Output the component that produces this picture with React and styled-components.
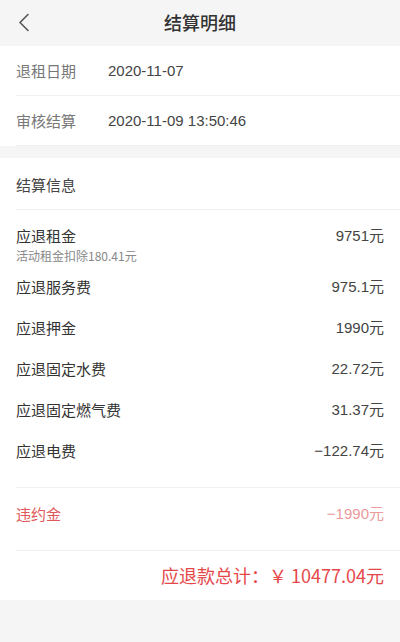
import styled, { createGlobalStyle } from "styled-components";

const GlobalStyle = createGlobalStyle`
  html, body {
    margin: 0;
    padding: 0;
    background: #f5f5f5;
    font-family: "Noto Sans CJK SC", "Liberation Sans", sans-serif;
    color: #333;
  }
`;

const dates = [
  { label: "退租日期", value: "2020-11-07" },
  { label: "审核结算", value: "2020-11-09 13:50:46" },
];

const items = [
  { label: "应退租金", value: "9751元", note: "活动租金扣除180.41元" },
  { label: "应退服务费", value: "975.1元" },
  { label: "应退押金", value: "1990元" },
  { label: "应退固定水费", value: "22.72元" },
  { label: "应退固定燃气费", value: "31.37元" },
  { label: "应退电费", value: "−122.74元" },
];

const BackIcon = () => (
  <svg width="12" height="19" viewBox="0 0 12 19">
    <path
      d="M10 1.5 L2 9.5 L10 17.5"
      fill="none"
      stroke="#555"
      strokeWidth="1.6"
      strokeLinecap="round"
      strokeLinejoin="round"
    />
  </svg>
);

const App = () => {
  return (
    <Page>
      <GlobalStyle />
      <Header>
        <Back>
          <BackIcon />
        </Back>
        <Title>结算明细</Title>
      </Header>

      <Section>
        {dates.map((d) => (
          <DateRow key={d.label}>
            <DateLabel>{d.label}</DateLabel>
            <DateValue>{d.value}</DateValue>
          </DateRow>
        ))}
      </Section>

      <Section $gap>
        <SectionTitle>结算信息</SectionTitle>
        <List>
          {items.map((it) => (
            <Item key={it.label}>
              <ItemMain>
                <ItemLabel>{it.label}</ItemLabel>
                <ItemValue>{it.value}</ItemValue>
              </ItemMain>
              {it.note && <Note>{it.note}</Note>}
            </Item>
          ))}
        </List>
        <Penalty>
          <ItemLabel $red>违约金</ItemLabel>
          <ItemValue $pink>−1990元</ItemValue>
        </Penalty>
        <Total>应退款总计：￥ 10477.04元</Total>
      </Section>
    </Page>
  );
};

export default App;

const Page = styled.div`
  width: 400px;
  min-height: 642px;
  background: #f5f5f5;
`;

const Header = styled.div`
  position: relative;
  height: 46px;
  display: flex;
  align-items: center;
  justify-content: center;
  background: #f5f5f5;
`;

const Back = styled.div`
  position: absolute;
  left: 18px;
  top: 13px;
  display: flex;
`;

const Title = styled.div`
  font-size: 18px;
  font-weight: 500;
  color: #333;
  line-height: 24px;
  margin-top: -2px;
`;

const Section = styled.div`
  background: #fff;
  margin-top: ${(p) => (p.$gap ? "12px" : "0")};
`;

const DateRow = styled.div`
  display: flex;
  align-items: center;
  height: 49px;
  margin-left: 16px;
  border-bottom: 1px solid #f0f0f0;
  font-size: 15px;
`;

const DateLabel = styled.div`
  width: 92px;
  color: #777;
`;

const DateValue = styled.div`
  color: #444;
  font-family: "Liberation Sans", "Noto Sans CJK SC", sans-serif;
`;

const SectionTitle = styled.div`
  margin-left: 16px;
  padding: 17px 0 14px;
  line-height: 20px;
  font-size: 15px;
  color: #444;
  border-bottom: 1px solid #f0f0f0;
`;

const List = styled.div`
  padding: 5px 16px 16px;
`;

const Item = styled.div`
  padding: 10px 0;
`;

const ItemMain = styled.div`
  display: flex;
  justify-content: space-between;
  align-items: center;
  line-height: 21px;
`;

const ItemLabel = styled.div`
  font-size: 15px;
  color: ${(p) => (p.$red ? "#e05a5a" : "#333")};
`;

const ItemValue = styled.div`
  font-size: 15px;
  font-family: "Liberation Sans", "Noto Sans CJK SC", sans-serif;
  color: ${(p) => (p.$pink ? "#ec9a9a" : "#444")};
`;

const Note = styled.div`
  margin: 3px 0 -7px;
  font-size: 12px;
  line-height: 14px;
  color: #888;
`;

const Penalty = styled.div`
  display: flex;
  justify-content: space-between;
  align-items: center;
  margin-left: 16px;
  padding: 16px 16px 26px 0;
  line-height: 20px;
  border-top: 1px solid #f0f0f0;
  border-bottom: 1px solid #f0f0f0;
`;

const Total = styled.div`
  padding: 12px 16px 13px;
  line-height: 24px;
  text-align: right;
  font-size: 18px;
  color: #e5484a;
`;
